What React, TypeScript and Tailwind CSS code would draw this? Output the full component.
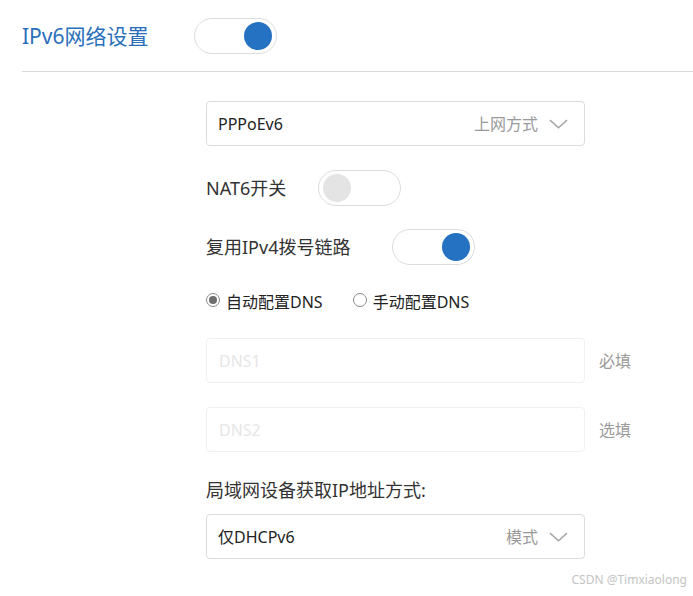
import React from "react";

const FONT = { fontFamily: '"Noto Sans", "Noto Sans CJK SC", sans-serif' };

function Toggle({ on }: { on: boolean }) {
  return (
    <div
      className={`flex h-[36px] w-[83px] shrink-0 items-center rounded-full border border-[#dcdcdc] bg-white px-[4px] ${
        on ? "justify-end" : "justify-start"
      }`}
    >
      <div
        className={`h-[28px] w-[28px] rounded-full ${on ? "bg-[#2672c2]" : "bg-[#e4e4e4]"}`}
      />
    </div>
  );
}

function Chevron() {
  return (
    <svg width="19" height="10" viewBox="0 0 19 10" className="shrink-0">
      <path d="M1 1.2 L9.5 8.8 L18 1.2" fill="none" stroke="#a8a8a8" strokeWidth="1.6" />
    </svg>
  );
}

function Select({ value, hint }: { value: string; hint: string }) {
  return (
    <div className="flex h-[45px] w-[379px] items-center rounded-[4px] border border-[#dcdcdc] bg-white pl-[11px] pr-[16px]">
      <span className="flex-1 text-[16px] text-[#222]">{value}</span>
      <span className="mr-[11px] text-[16px] text-[#9a9a9a]">{hint}</span>
      <Chevron />
    </div>
  );
}

function Input({ placeholder, note }: { placeholder: string; note: string }) {
  return (
    <div className="flex items-center">
      <div className="flex h-[45px] w-[379px] items-center rounded-[4px] border border-[#f0f0f0] bg-white pl-[12px]">
        <span className="text-[16px] text-[#e6e6e6]">{placeholder}</span>
      </div>
      <span className="ml-[14px] text-[16px] text-[#9a9a9a]">{note}</span>
    </div>
  );
}

function Radio({ checked, label }: { checked: boolean; label: string }) {
  return (
    <div className="flex items-center">
      <div className="mb-[4px] flex h-[14px] w-[14px] items-center justify-center rounded-full border border-[#8a8a8a] bg-white">
        {checked && <div className="h-[8px] w-[8px] rounded-full bg-[#6e6e6e]" />}
      </div>
      <span className="ml-[6px] text-[16px] text-[#222]">{label}</span>
    </div>
  );
}

export default function App() {
  return (
    <div className="relative h-[596px] w-[693px] overflow-hidden bg-white" style={FONT}>
      <div className="ml-[22px] flex items-center pt-[18px]">
        <span className="w-[172px] text-[21px] leading-[36px] text-[#2a6fba]">IPv6网络设置</span>
        <Toggle on />
      </div>
      <div className="ml-[22px] mt-[17px] h-px bg-[#d9d9d9]" />

      <div className="ml-[206px] flex flex-col">
        <div className="mt-[29px]">
          <Select value="PPPoEv6" hint="上网方式" />
        </div>
        <div className="mt-[24px] flex items-center">
          <span className="w-[112px] text-[18px] text-[#333]">NAT6开关</span>
          <Toggle on={false} />
        </div>
        <div className="mt-[23px] flex items-center">
          <span className="w-[186px] text-[18px] text-[#333]">复用IPv4拨号链路</span>
          <Toggle on />
        </div>
        <div className="mt-[25px] flex h-[24px] items-center gap-[30px]">
          <Radio checked label="自动配置DNS" />
          <Radio checked={false} label="手动配置DNS" />
        </div>
        <div className="mt-[24px]">
          <Input placeholder="DNS1" note="必填" />
        </div>
        <div className="mt-[24px]">
          <Input placeholder="DNS2" note="选填" />
        </div>
        <div className="mt-[25px] text-[18px] leading-[26px] text-[#333]">局域网设备获取IP地址方式:</div>
        <div className="mt-[11px]">
          <Select value="仅DHCPv6" hint="模式" />
        </div>
      </div>

      <div className="absolute bottom-[7px] right-[6px] text-[12px] text-[#c4c4c4]">CSDN @Timxiaolong</div>
    </div>
  );
}
